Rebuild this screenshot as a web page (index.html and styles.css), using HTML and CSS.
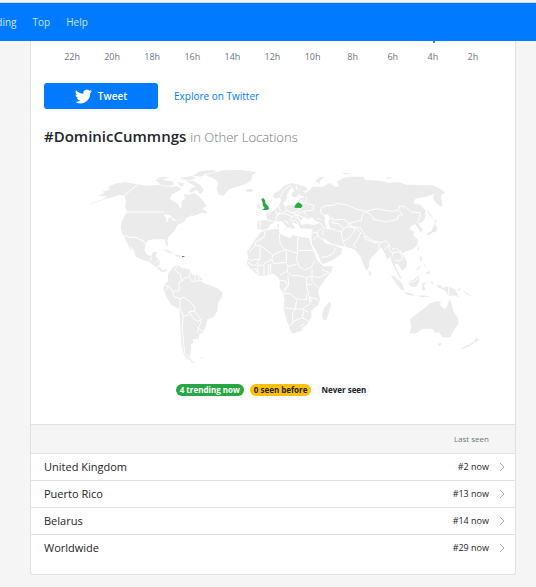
FILE: index.html
```html
<!DOCTYPE html>
<html lang="en">

<head>
  <meta charset="UTF-8" />
  <meta name="viewport" content="width=device-width, initial-scale=1.0" />
  <title>#DominicCummngs</title>
  <link rel="stylesheet" href="styles.css">
</head>

<body>
  <nav class="navbar">
    <ul>
      <li><a href="#">Trending</a></li>
      <li><a href="#">Top</a></li>
      <li><a href="#">Help</a></li>
    </ul>
  </nav>

  <main class="card">
    <!-- chart axis -->
    <div class="hours">
      <span>22h</span>
      <span>20h</span>
      <span>18h</span>
      <span>16h</span>
      <span>14h</span>
      <span>12h</span>
      <span>10h</span>
      <span>8h</span>
      <span>6h</span>
      <span class="peak">4h</span>
      <span>2h</span>
    </div>

    <div class="actions">
      <button type="button" class="tweet">
        <svg viewBox="0 0 24 24" aria-hidden="true">
          <path d="M23.95 4.57a10 10 0 0 1-2.82.77 4.96 4.96 0 0 0 2.16-2.72c-.95.55-2 .96-3.13 1.18a4.92 4.92 0 0 0-8.38 4.48A13.93 13.93 0 0 1 1.64 3.16a4.93 4.93 0 0 0 1.52 6.57 4.9 4.9 0 0 1-2.23-.61v.06a4.92 4.92 0 0 0 3.95 4.83 5 5 0 0 1-2.21.08 4.94 4.94 0 0 0 4.6 3.42A9.87 9.87 0 0 1 0 19.54a13.99 13.99 0 0 0 7.55 2.21c9.05 0 14-7.5 14-13.98 0-.21 0-.42-.02-.63a9.94 9.94 0 0 0 2.42-2.57z" />
        </svg>
        Tweet
      </button>
      <a href="#">Explore on Twitter</a>
    </div>

    <h2>#DominicCummngs <small>in Other Locations</small></h2>

    <svg class="map" viewBox="-138 0 1374 630" role="img" aria-label="World map">
      <!-- north america -->
      <g class="land">
        <path d="M26 107L44 99 36 95 60 89 54 80 75 71 105 67 143 73 103 107 90 104 76 108 60 114 40 118 50 109Z" />
        <path d="M143 73L170 77 205 74 230 80 262 79 274 86 262 95 246 102 240 116 252 126 264 131 270 146 276 140 274 126 286 113 280 103 298 104 312 98 330 112 340 124 350 138 334 148 312 158 302 168 288 174 272 176 255 184 242 184 235 162 222 156 112 156 104 142 106 126 103 107Z" />
        <path d="M112 156L222 156 242 162 246 182 272 176 290 172 284 184 262 196 254 212 236 230 232 242 235 258 228 256 224 238 196 238 176 240 166 252 158 240 150 240 138 232 118 232 98 226 92 204 94 186 104 168Z" />
        <path d="M103 226L118 232 138 232 150 240 158 240 166 252 164 272 172 285 184 288 190 276 202 276 196 288 210 304 208 318 216 330 230 328 230 334 214 336 198 322 178 306 158 300 138 290 132 272 120 254 128 276 118 262 108 244Z" />
        <path d="M222 268L238 272 252 282 242 280 224 273ZM256 284L274 287 268 291 256 289Z" />
        <path d="M308 158L326 152 332 144 350 154 350 161 334 158 320 164 306 170Z" />
        <path d="M194 60L214 54 228 62 248 64 252 74 232 78 212 74 204 67ZM196 53L222 50 240 54 216 57ZM262 66L282 70 278 80 268 76ZM284 62L310 62 332 76 342 92 330 102 320 90 306 96 302 84 318 80 300 70ZM270 53L306 48 318 54 300 60 274 58ZM308 47L330 34 372 29 380 35 348 42 332 50ZM298 88L310 94 300 98Z" />
        <path d="M346 46L372 38 400 31 450 30 500 36 486 46 484 62 466 72 442 80 418 88 400 108 386 104 380 86 386 66 368 54Z" />
        <path d="M468 88L484 86 492 90 484 96 470 95Z" />
      </g>
      <path class="line" d="M0 131L24 124 44 117" />
      <path class="green" d="M276 288h7v3h-7z" />
      <path class="border" d="M143 73L103 107 106 126 104 142 112 156 222 156M103 226L118 232 138 232 150 240 158 240 166 252M180 302L186 290M196 306L206 302M198 322L210 318" />
      <path class="lake" d="M222 164l16 2 8 5-10 1 -5 14-2-13zM244 172l6 10 8-2M258 184l12-5" />

      <!-- south america -->
      <g transform="translate(0 270)">
        <path class="land" d="M234 72L248 52 262 46 278 54 298 58 306 74 325 76 338 88 338 98 362 106 388 118 398 128 396 142 384 156 382 182 372 200 352 208 348 228 338 248 328 252 326 266 308 268 310 278 302 284 304 298 298 318 306 332 290 326 280 308 274 280 272 246 270 210 268 178 244 164 230 142 220 118 222 104 234 94Z" />
        <path class="land" d="M302 330l16 8-14-1zM332 322h8v3h-8z" />
        <path class="border" d="M262 46L254 60 270 72 276 94 266 96 268 122 248 124 236 108 222 106M236 108L224 124M248 124L252 140 270 146 270 178M270 146L282 142 302 156 314 172 314 184 330 206 334 214 326 232 322 250M314 184L298 184 294 196 280 198 270 176M280 198L276 230 280 274 284 308 300 328M298 184L308 204 324 214 334 208M322 232L338 244M276 94L284 84 298 80 300 64M298 80L306 94 338 92M314 76L316 92M326 78L328 92" />
      </g>

      <!-- europe and asia -->
      <g class="land">
        <path d="M550 112L550 102 570 90 584 76 606 69 622 74 616 84 628 100 622 110 610 112 604 104 612 92 606 84 596 94 590 106 592 114 584 126 576 128 570 112 558 116Z" />
        <path d="M502 206L502 182 532 180 528 160 544 156 556 148 566 138 572 124 580 128 584 138 612 134 624 126 626 116 646 112 632 106 624 96 620 72 646 80 654 90 638 94 646 99 660 90 666 80 700 80 720 68 736 82 748 78 740 66 760 54 780 50 820 50 826 60 870 62 895 68 925 67 950 74 1000 76 1030 76 1050 86 1066 98 1054 106 1056 142 1038 130 1028 112 1034 102 1005 110 976 116 970 130 990 134 1006 150 1006 172 996 188 984 188 998 210 992 218 982 202 976 192 964 198 958 208 972 214 970 226 984 240 982 256 968 268 948 274 936 280 952 306 948 322 936 332 924 312 914 314 934 354 930 356 904 304 902 290 892 298 886 284 874 262 864 272 850 286 838 304 836 322 830 334 822 318 812 290 802 278 792 268 766 260 744 256 722 250 698 232 706 250 732 256 756 266 754 282 728 300 700 312 694 308 682 278 666 252 664 230 668 206 650 206 632 206 626 194 606 186 616 206 604 206 590 182 582 180 600 198 594 206 576 184 558 184 540 194 534 206 518 210Z" />
        <path d="M500 138l10-8 2 14-9 4zM582 206l8 2-4 3zM562 192h5v10h-5z" />
        <path d="M676 62L690 52 704 50 692 60 688 70ZM754 38L772 39 786 43 764 42ZM886 51L910 53 896 57Z" />
        <path d="M1034 178L1042 184 1034 190ZM1034 192L1042 202 1040 214 1026 218 1012 228 1010 220 1024 214ZM1010 150l10 10 10 18-12-14zM984 260l4 2-2 10-4-4z" />
        <path d="M836 330l8 8-2 10-6-4z" />
      </g>
      <path class="lake" d="M630 184L644 172 656 178 666 172 674 182 690 188 672 194 650 190 634 194ZM704 166L714 164 718 176 714 184 718 202 724 208 712 206 706 188Z" />
      <path class="border" d="M532 180L556 186 562 164 556 150M562 164L578 160 594 164 606 170 602 182M566 138L572 154 562 164M586 138L590 152 606 158 626 154 630 140 610 134M578 160L590 152M606 158L620 164 640 154 670 150 672 136 650 130M606 170L620 164 630 184M614 172L626 176M606 184L616 180 626 192M620 164L642 172M640 154L650 166M622 118L636 122M622 126L646 130 650 112M570 112L580 92 600 76M600 76L606 88M510 184L510 206M694 180L680 174M690 188L702 204 724 206" />
      <path class="border" d="M704 166L690 156 694 144 710 136 734 136 736 130 770 134 800 148 828 154 816 166 814 182 798 184 780 190 760 178 736 180 724 174 716 180M828 154L844 150 862 146 878 150 906 154 926 150 928 138 946 140 964 156 990 158 990 172 980 188M828 154L846 168 850 178 888 186 922 178 924 168 938 164 926 152M728 176L732 190 744 190 762 206 772 200 778 188M732 190L722 186M762 206L754 216 758 244 766 260M754 216L724 206M772 200L794 202 792 218 772 238 758 244M794 202L812 218 804 236 790 256 800 264M780 190L782 200 812 204 824 226 848 242 874 248 888 242 898 254 884 270M824 228L826 238 862 250M868 250L866 268M898 254L898 272 908 278 906 290M908 278L924 276 936 280M906 268L916 264 932 274 938 296 926 304 914 300M664 220L682 216 694 204M682 216L684 228 670 238M684 228L706 246M700 206L698 226M694 292L712 290 730 280M730 280L736 264" />

      <g class="green">
        <path d="M514 118L520 114 526 122 526 130 534 138 538 147 530 150 516 150 524 144 518 136 518 128Z" />
        <path d="M613 140L618 132 625 127 633 131 638 138 632 144 614 143Z" />
      </g>

      <!-- africa -->
      <g transform="translate(450 195)">
        <path class="land" d="M62 22L78 15 115 12 120 26 140 36 150 40 156 30 172 34 208 40 212 56 222 80 230 104 250 124 278 124 274 140 256 162 240 184 234 200 240 222 236 240 214 256 214 276 200 300 184 318 156 326 150 312 138 280 130 250 134 222 130 206 118 186 120 170 116 158 100 146 76 152 54 152 36 136 20 116 24 100 22 78 36 58 48 40Z" />
        <path class="land" d="M270 228L273 240 260 284 250 284 246 270 252 250Z" />
        <path class="border" d="M76 18L72 36 46 52 46 62 62 62 98 90 134 74 120 54 118 26M46 60L28 80M60 64L60 102 30 106 24 100M60 102L52 116 40 122 24 112M98 90L96 104 76 112 68 122 52 120M134 74L140 84 138 112 100 116 96 104M134 74L172 84 174 36M176 76L220 76M172 84L170 106 178 126 194 134 214 128 224 106M138 112L144 124 142 138 120 150M144 124L170 118M138 138L154 152 180 152 200 158 216 154 216 132M216 154L236 158 268 142 244 134M216 158L216 170 234 188M200 158L200 186 206 208M200 178L216 178M120 166L136 168 142 182 130 196M144 154L146 180 132 202M130 206L150 206 168 222 200 224 200 208M130 248L166 252 170 224M166 252L188 252 210 236 208 216 236 224M206 210L216 232M188 252L206 262M166 252L158 266 158 296 146 302M158 290L186 278 206 288M186 278L192 256M180 304L190 298 194 306 184 312M54 120L54 150M72 120L72 150M86 118L84 150M92 116L92 148M36 136L46 130 52 142M28 112L36 124" />
      </g>

      <!-- indonesia and australia -->
      <g transform="translate(840 270)">
        <path class="land" d="M62 74L74 80 96 100 104 124 92 118 76 98ZM100 126L124 130 136 138 112 134ZM116 94L130 90 148 74 148 94 140 110 122 110 116 102ZM156 98L172 98 160 104 166 118 156 122ZM140 138L160 136 182 140 160 142ZM150 18L156 20 156 34 150 30ZM166 68L178 62 180 72 170 72ZM160 40l8 8-2 4zM136 64l14-10 2-6-8 4zM184 94h6v8h-6zM198 104L212 106 218 114 236 108 256 120 268 144 254 136 236 138 226 122 204 112ZM260 124l10-4 4-6-8 2z" />
        <path class="land" d="M120 208L148 186 164 174 180 160 196 154 212 154 210 166 224 178 232 168 238 148 246 166 250 184 264 204 266 220 250 244 240 262 218 262 206 246 198 250 186 236 156 238 140 250 118 250 124 232ZM206 280L216 280 210 288 204 286Z" />
        <path class="land" d="M318 262L324 268 330 266 318 278 312 274ZM312 274L314 280 292 292 270 300 282 290 300 282ZM300 226l10 8-4-1zM278 122l18 10 14 10-20-9z" />
        <path class="border" d="M236 108V138M116 98L134 94 148 80" />
      </g>
    </svg>

    <div class="legend">
      <span class="badge now">4 trending now</span>
      <span class="badge before">0 seen before</span>
      <span class="badge never">Never seen</span>
    </div>

    <table>
      <thead>
        <tr>
          <th></th>
          <th class="seen">Last seen</th>
          <th></th>
        </tr>
      </thead>
      <tbody>
        <tr>
          <td><a href="#">United Kingdom</a></td>
          <td class="seen">#2 now</td>
          <td class="arrow"><svg viewBox="0 0 6 10" aria-hidden="true"><path d="M1 1l4 4-4 4" /></svg></td>
        </tr>
        <tr>
          <td><a href="#">Puerto Rico</a></td>
          <td class="seen">#13 now</td>
          <td class="arrow"><svg viewBox="0 0 6 10" aria-hidden="true"><path d="M1 1l4 4-4 4" /></svg></td>
        </tr>
        <tr>
          <td><a href="#">Belarus</a></td>
          <td class="seen">#14 now</td>
          <td class="arrow"><svg viewBox="0 0 6 10" aria-hidden="true"><path d="M1 1l4 4-4 4" /></svg></td>
        </tr>
        <tr>
          <td><a href="#">Worldwide</a></td>
          <td class="seen">#29 now</td>
          <td class="arrow"><svg viewBox="0 0 6 10" aria-hidden="true"><path d="M1 1l4 4-4 4" /></svg></td>
        </tr>
      </tbody>
    </table>
  </main>
</body>

</html>
```
FILE: styles.css
```css
* {
  box-sizing: border-box;
  margin: 0;
  padding: 0;
}

body {
  padding-top: 2px;
  background: #f5f5f5;
  color: #212529;
  font-family: "Open Sans", "Noto Sans", sans-serif;
  font-size: 11px;
  line-height: 16px;
  overflow-x: hidden;
}

a {
  color: #007bff;
  text-decoration: none;
}

.navbar {
  height: 39px;
  border-top: 1px solid #d9dcdf;
  background: #007bff;
  font-size: 10px;
  overflow: hidden;
}

/* first link runs off the left edge */
.navbar ul {
  display: flex;
  gap: 16px;
  margin-left: -25px;
  padding-top: 11px;
  list-style: none;
}

.navbar a {
  color: #cce5ff;
}

.card {
  margin: 0 20px 12px 30px;
  padding-bottom: 12px;
  background: #fff;
  border: 1px solid #dee0e2;
  border-top: none;
  border-radius: 0 0 3px 3px;
}

.hours {
  display: grid;
  grid-template-columns: repeat(11, 1fr);
  padding: 8px 22px 0 21px;
  color: #6c757d;
  font-size: 9px;
  text-align: center;
}

.peak {
  position: relative;
}

.peak::before {
  content: "";
  position: absolute;
  top: -8px;
  left: 50%;
  width: 2px;
  height: 2px;
  background: #28a745;
}

.actions {
  display: flex;
  align-items: center;
  gap: 16px;
  padding: 18px 13px 0;
  font-size: 10px;
}

.tweet {
  display: flex;
  align-items: center;
  justify-content: center;
  gap: 6px;
  width: 114px;
  height: 26px;
  border: none;
  border-radius: 3px;
  background: #007bff;
  color: #fff;
  font: 600 10px "Open Sans", "Noto Sans", sans-serif;
  cursor: pointer;
}

.tweet svg {
  width: 17px;
  height: 17px;
  fill: #fff;
}

h2 {
  padding: 17px 13px 0;
  font-size: 15px;
  font-weight: 600;
  line-height: 20px;
}

h2 small {
  color: #6c757d;
  font-size: 13px;
  font-weight: 300;
}

.map {
  display: block;
  width: calc(100% - 26px);
  margin: 13px 13px 0;
}

.land {
  fill: #ebebeb;
}

.green {
  fill: #28a745;
}

.lake {
  fill: #fff;
  stroke: #fff;
  stroke-width: 2;
}

.line {
  fill: none;
  stroke: #ebebeb;
  stroke-width: 2;
}

.border {
  fill: none;
  stroke: #fff;
  stroke-width: 3;
  stroke-linejoin: round;
}

.legend {
  display: flex;
  justify-content: center;
  gap: 6px;
  padding: 14px 0 28px;
}

.badge {
  padding: 0 4px;
  border-radius: 6px;
  font-size: 8px;
  font-weight: 700;
  line-height: 12px;
}

.now {
  background: #28a745;
  color: #fff;
}

.before {
  background: #ffc107;
}

.never {
  background: #f8f9fa;
}

table {
  width: 100%;
  border-collapse: collapse;
}

th,
td {
  height: 27px;
  padding: 0 13px;
  border-top: 1px solid #dee0e6;
  text-align: left;
}

th {
  height: 29px;
  background: #f5f5f5;
  color: #6c757d;
  font-weight: 400;
}

td a {
  color: #212529;
}

th.seen,
td.seen {
  padding: 0;
  font-size: 9px;
  text-align: right;
}

th.seen {
  font-size: 8px;
}

.arrow {
  width: 26px;
  padding: 0 10px;
}

.arrow svg {
  display: block;
  width: 6px;
  height: 10px;
  fill: none;
  stroke: #a9acaf;
}
```
